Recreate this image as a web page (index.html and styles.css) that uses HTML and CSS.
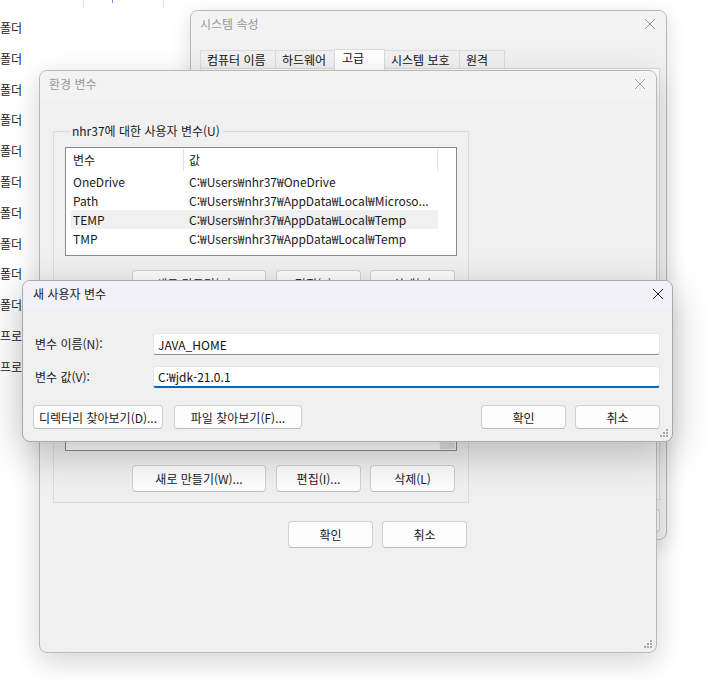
FILE: index.html
```html
<!DOCTYPE html>
<html lang="ko">
<head>
  <meta charset="UTF-8" />
  <title>환경 변수</title>
  <link rel="stylesheet" href="styles.css">
</head>
<body>
  <div class="desktop">
    <div class="explorer">
      <div class="explorer-head">
        <span class="head-cell first"></span>
        <span class="head-cell second"><i class="sort-tick"></i></span>
      </div>
      <ul class="type-list">
        <li>폴더</li>
        <li>폴더</li>
        <li>폴더</li>
        <li>폴더</li>
        <li>폴더</li>
        <li>폴더</li>
        <li>폴더</li>
        <li>폴더</li>
        <li>폴더</li>
        <li>폴더</li>
        <li>프로</li>
        <li>프로</li>
      </ul>
    </div>

    <!-- 시스템 속성 -->
    <div class="window sys-window">
      <div class="title-bar inactive">
        <span class="title">시스템 속성</span>
        <svg class="close" width="12" height="12" viewBox="0 0 12 12"><path d="M1 1L11 11M11 1L1 11" /></svg>
      </div>
      <div class="sys-body">
        <div class="tabs">
          <span class="tab w75">컴퓨터 이름</span>
          <span class="tab w59">하드웨어</span>
          <span class="tab w50 selected">고급</span>
          <span class="tab w75">시스템 보호</span>
          <span class="tab w45">원격</span>
        </div>
        <div class="tab-page"></div>
        <div class="sys-actions">
          <button class="btn"></button>
          <button class="btn"></button>
          <button class="btn"></button>
        </div>
      </div>
    </div>

    <!-- 환경 변수 -->
    <div class="window env-window">
      <div class="title-bar inactive">
        <span class="title">환경 변수</span>
        <svg class="close" width="12" height="12" viewBox="0 0 12 12"><path d="M1 1L11 11M11 1L1 11" /></svg>
      </div>
      <div class="env-body">
        <fieldset class="group">
          <legend>nhr37에 대한 사용자 변수(U)</legend>
          <div class="var-list">
            <div class="list-head">
              <span class="cell name">변수</span>
              <span class="cell value">값</span>
            </div>
            <div class="list-row"><span class="cell name">OneDrive</span><span class="cell value">C:₩Users₩nhr37₩OneDrive</span></div>
            <div class="list-row"><span class="cell name">Path</span><span class="cell value">C:₩Users₩nhr37₩AppData₩Local₩Microso...</span></div>
            <div class="list-row hover"><span class="cell name">TEMP</span><span class="cell value">C:₩Users₩nhr37₩AppData₩Local₩Temp</span></div>
            <div class="list-row"><span class="cell name">TMP</span><span class="cell value">C:₩Users₩nhr37₩AppData₩Local₩Temp</span></div>
          </div>
          <div class="group-actions">
            <button class="btn wide">새로 만들기(N)...</button>
            <button class="btn">편집(E)...</button>
            <button class="btn">삭제(D)</button>
          </div>
        </fieldset>

        <fieldset class="group system">
          <div class="var-list">
            <div class="scrollbar"><span class="thumb"></span></div>
          </div>
          <div class="group-actions">
            <button class="btn wide">새로 만들기(W)...</button>
            <button class="btn">편집(I)...</button>
            <button class="btn">삭제(L)</button>
          </div>
        </fieldset>

        <div class="dialog-actions">
          <button class="btn">확인</button>
          <button class="btn">취소</button>
        </div>
      </div>
      <svg class="grip" width="10" height="10" viewBox="0 0 10 10"><rect x="7" y="1" width="2" height="2"/><rect x="4" y="4" width="2" height="2"/><rect x="7" y="4" width="2" height="2"/><rect x="1" y="7" width="2" height="2"/><rect x="4" y="7" width="2" height="2"/><rect x="7" y="7" width="2" height="2"/></svg>
    </div>

    <!-- 새 사용자 변수 -->
    <div class="window new-var-dialog">
      <div class="title-bar active">
        <span class="title">새 사용자 변수</span>
        <svg class="close" width="12" height="12" viewBox="0 0 12 12"><path d="M1 1L11 11M11 1L1 11" /></svg>
      </div>
      <div class="new-var-body">
        <div class="field-row">
          <label class="field-label" for="var-name">변수 이름(N):</label>
          <input class="field-input" id="var-name" type="text" value="JAVA_HOME">
        </div>
        <div class="field-row">
          <label class="field-label" for="var-value">변수 값(V):</label>
          <input class="field-input focused" id="var-value" type="text" value="C:₩jdk-21.0.1">
        </div>
        <div class="new-var-actions">
          <button class="btn browse-dir">디렉터리 찾아보기(D)...</button>
          <button class="btn browse-file">파일 찾아보기(F)...</button>
          <span class="spacer"></span>
          <button class="btn">확인</button>
          <button class="btn">취소</button>
        </div>
      </div>
      <svg class="grip" width="10" height="10" viewBox="0 0 10 10"><rect x="7" y="1" width="2" height="2"/><rect x="4" y="4" width="2" height="2"/><rect x="7" y="4" width="2" height="2"/><rect x="1" y="7" width="2" height="2"/><rect x="4" y="7" width="2" height="2"/><rect x="7" y="7" width="2" height="2"/></svg>
    </div>
  </div>
</body>
</html>
```

FILE: styles.css
```css
body {
  margin: 0;
  background: #ffffff;
  font-family: "Noto Sans CJK KR", "Noto Sans", sans-serif;
  font-size: 12px;
  color: #1a1a1a;
  overflow: hidden;
}

.desktop {
  position: relative;
  width: 706px;
  height: 681px;
  overflow: hidden;
}

/* explorer behind the dialogs */
.explorer-head {
  display: flex;
  height: 8px;
}

.head-cell {
  display: block;
  height: 8px;
  border-right: 1px solid #e5e5e5;
}

.head-cell.first {
  width: 83px;
}

.head-cell.second {
  width: 79px;
}

.sort-tick {
  display: block;
  width: 1px;
  height: 3px;
  margin-left: 28px;
  background: #5a9bd8;
}

.type-list {
  list-style: none;
  margin: 5px 0 0 0;
  padding: 0;
}

.type-list li {
  line-height: 30.8px;
  height: 30.8px;
  color: #222;
}

/* windows */
.window {
  position: absolute;
  display: flex;
  flex-direction: column;
  box-sizing: border-box;
  background: #f0f0f0;
  border: 1px solid #b9b9b9;
  border-radius: 8px;
  overflow: hidden;
}

.title-bar {
  box-sizing: border-box;
  display: flex;
  align-items: center;
  justify-content: space-between;
  height: 29px;
  padding: 0 10px 4px 9px;
  flex-shrink: 0;
}

.title-bar.inactive {
  background: #f3f3f3;
}

.title-bar.inactive .title {
  color: #999999;
}

.title-bar.active {
  background: #f3f1f8;
}

.title-bar.active .title {
  color: #1a1a1a;
}

.close {
  fill: none;
  stroke-width: 1;
}

.inactive .close {
  stroke: #9a9a9a;
}

.active .close {
  stroke: #222222;
}

.btn {
  box-sizing: border-box;
  width: 85px;
  height: 27px;
  padding: 0;
  background: #fdfdfd;
  border: 1px solid #d0d0d0;
  border-bottom-color: #bcbcbc;
  border-radius: 4px;
  font-family: inherit;
  font-size: 12px;
  color: #1a1a1a;
}

.grip {
  position: absolute;
  right: 3px;
  bottom: 3px;
  fill: #a8a8a8;
}

/* 시스템 속성 */
.sys-window {
  left: 190px;
  top: 10px;
  width: 477px;
  height: 530px;
  box-shadow: 0 6px 20px rgba(0, 0, 0, 0.14);
}

.sys-body {
  flex: 1;
  display: flex;
  flex-direction: column;
  padding: 9px 6px 7px 9px;
}

.tabs {
  display: flex;
  align-items: flex-end;
  height: 19px;
}

.tab {
  box-sizing: border-box;
  height: 18px;
  line-height: 17px;
  padding-left: 6px;
  background: #f0f0f0;
  border: 1px solid #dadada;
  border-bottom: none;
  margin-right: -1px;
  color: #111;
}

.tab.selected {
  height: 21px;
  line-height: 16px;
  padding-left: 7px;
  background: #ffffff;
  margin-bottom: -2px;
  position: relative;
}

.w75 { width: 76px; }
.w59 { width: 60px; }
.w50 { width: 51px; }
.w45 { width: 46px; }

.tab-page {
  flex: 1;
  background: #fbfbfb;
  border: 1px solid #dadada;
}

.sys-actions {
  display: flex;
  justify-content: flex-end;
  gap: 8px;
  margin-top: 9px;
}

.sys-actions .btn {
  height: 23px;
  width: 75px;
}

/* 환경 변수 */
.env-window {
  left: 39px;
  top: 70px;
  width: 618px;
  height: 583px;
  box-shadow: 0 8px 28px rgba(0, 0, 0, 0.18);
}

.env-body {
  padding: 23px 0 0 13px;
  width: 416px;
}

.group {
  margin: 0;
  padding: 8px 11px 10px 11px;
  border: 1px solid #dcdcdc;
  min-width: 0;
}

.group legend {
  padding: 0 2px;
  margin-left: 5px;
  line-height: 16px;
  color: #1a1a1a;
}

.group.system {
  margin-top: 10px;
  padding-top: 23px;
}

.var-list {
  position: relative;
  box-sizing: border-box;
  height: 109px;
  background: #ffffff;
  border: 1px solid #8a8a8a;
  padding: 0 18px 0 5px;
  overflow: hidden;
}

.list-head {
  display: flex;
  height: 24px;
  align-items: center;
}

.list-head .cell {
  height: 22px;
  line-height: 22px;
}

.list-head .value {
  border-left: 1px solid #e3e3e3;
  border-right: 1px solid #e3e3e3;
  box-sizing: border-box;
}

.list-row {
  display: flex;
  height: 19px;
  line-height: 19px;
}

.list-row.hover {
  background: #f0f0f0;
}

.cell {
  white-space: nowrap;
  overflow: hidden;
}

.cell.name {
  width: 110px;
  padding-left: 2px;
  flex-shrink: 0;
}

.cell.value {
  width: 255px;
  padding-left: 5px;
  flex-shrink: 0;
}

.list-row .cell.value {
  width: 249px;
  padding-left: 6px;
}

.scrollbar {
  position: absolute;
  right: 0;
  top: 0;
  bottom: 0;
  width: 17px;
  background: #fafafa;
}

.thumb {
  display: block;
  position: absolute;
  right: 1px;
  bottom: 1px;
  width: 15px;
  height: 7px;
  background: #e2e2e2;
}

.group-actions {
  display: flex;
  justify-content: flex-end;
  gap: 9px;
  margin-top: 14px;
  padding-right: 2px;
}

.btn.wide {
  width: 134px;
  margin-right: 1px;
}

.dialog-actions {
  display: flex;
  justify-content: flex-end;
  gap: 9px;
  margin-top: 18px;
  padding-right: 2px;
}

/* 새 사용자 변수 */
.new-var-dialog {
  left: 22px;
  top: 280px;
  width: 651px;
  height: 162px;
  border-color: #aaaaaa;
  box-shadow: 0 12px 40px rgba(0, 0, 0, 0.24);
}

.new-var-dialog .title-bar {
  padding-left: 10px;
  padding-right: 8px;
}

.new-var-body {
  display: flex;
  flex-direction: column;
  gap: 11px;
  padding: 23px 12px 0 10px;
}

.field-row {
  display: flex;
  align-items: center;
}

.field-label {
  width: 118px;
  padding-left: 2px;
  margin-top: -2px;
  color: #1a1a1a;
}

.field-input {
  box-sizing: border-box;
  width: 507px;
  height: 22px;
  padding: 0 4px;
  background: #ffffff;
  border: 1px solid #e6e6e6;
  border-bottom: 1px solid #8d8d8d;
  border-radius: 3px;
  font-family: inherit;
  font-size: 12px;
  color: #111;
  outline: none;
}

.field-input.focused {
  border-bottom: 2px solid #0067c0;
}

.new-var-actions {
  display: flex;
  align-items: center;
  gap: 9px;
  margin-top: 6px;
}

.new-var-actions .btn {
  height: 24px;
}

.btn.browse-dir {
  width: 130px;
  margin-right: 2px;
}

.btn.browse-file {
  width: 128px;
}

.spacer {
  flex: 1;
}
```
